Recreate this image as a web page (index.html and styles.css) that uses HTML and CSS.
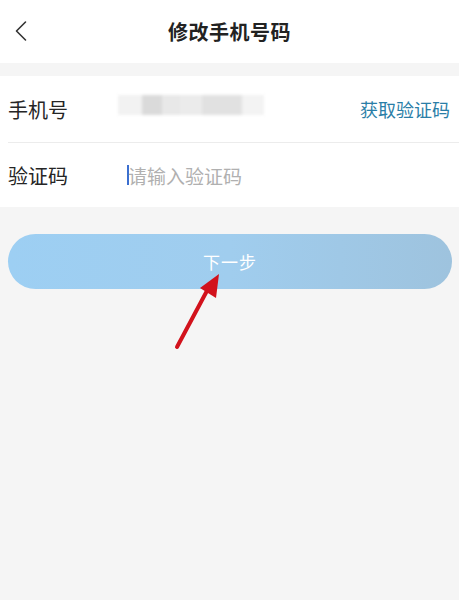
FILE: index.html
```html
<!DOCTYPE html>
<html lang="zh">
<head>
<meta charset="utf-8">
<link rel="stylesheet" href="styles.css">
</head>
<body>
<div class="page">
  <header class="topbar">
    <svg class="back" width="14" height="22" viewBox="0 0 14 22"><path d="M11.5 2 L2.5 11 L11.5 20" fill="none" stroke="#333" stroke-width="1.6" stroke-linecap="round" stroke-linejoin="round"/></svg>
    <h1 class="title">修改手机号码</h1>
  </header>
  <section class="form">
    <div class="row">
      <span class="label">手机号</span>
      <div class="masked">
        <span class="m m1"></span><span class="m m2"></span><span class="m m3"></span><span class="m m4"></span><span class="m m5"></span><span class="m m6"></span>
      </div>
      <span class="getcode">获取验证码</span>
    </div>
    <div class="divider"></div>
    <div class="row row2">
      <span class="label">验证码</span>
      <div class="input"><span class="caret"></span><span class="placeholder">请输入验证码</span></div>
    </div>
  </section>
  <div class="btnwrap">
    <div class="btn">下一步</div>
  </div>
  <svg class="arrow" width="459" height="600" viewBox="0 0 459 600">
    <line x1="177" y1="347" x2="209" y2="287" stroke="#d2121c" stroke-width="4" stroke-linecap="round"/>
    <polygon points="219,274 200,288 216,298" fill="#d2121c"/>
  </svg>
</div>
</body>
</html>
```
FILE: styles.css
```css
* { box-sizing: border-box; }
html, body { margin: 0; padding: 0; }
body {
  background: #f5f5f5;
  font-family: "Noto Sans CJK SC", "Noto Sans", sans-serif;
  width: 459px;
  height: 600px;
  overflow: hidden;
}
.page { position: relative; width: 459px; height: 600px; }
.topbar {
  height: 63px;
  background: #fff;
  display: flex;
  align-items: center;
  justify-content: center;
  position: relative;
}
.back { position: absolute; left: 14px; top: 20px; }
.title {
  margin: 0;
  font-size: 20px;
  font-weight: 700;
  color: #222;
  letter-spacing: 0.5px;
}
.form {
  margin-top: 13px;
  background: #fff;
  height: 131px;
  display: flex;
  flex-direction: column;
}
.row {
  height: 66px;
  display: flex;
  align-items: center;
  padding: 0 9px 0 8px;
}
.row2 { height: 64px; }
.label {
  width: 110px;
  font-size: 20px;
  color: #252525;
  flex: none;
}
.divider { height: 1px; background: #ececec; margin-left: 8px; }
.masked {
  display: flex;
  height: 20px;
  margin-top: -8px;
  flex: 1;
  filter: blur(1.5px);
}
.m { display: block; height: 20px; }
.m1 { width: 24px; background: #f2f2f2; }
.m2 { width: 20px; background: #dadada; }
.m3 { width: 18px; background: #e8e8e8; }
.m4 { width: 22px; background: #ebebeb; }
.m5 { width: 40px; background: #e1e1e1; }
.m6 { width: 22px; background: #f3f3f3; }
.getcode {
  font-size: 18px;
  color: #2a7ea7;
  flex: none;
}
.input { display: flex; align-items: center; margin-left: 9px; }
.caret { width: 2px; height: 20px; background: #3b6fd0; margin-right: -1px; }
.placeholder { font-size: 19px; color: #b0b0b0; }
.btnwrap { padding: 27px 7px 0 8px; }
.btn {
  height: 55px;
  border-radius: 28px;
  background: linear-gradient(90deg, #9dcff3 0%, #a0cdee 50%, #9ec3de 100%);
  color: #fff;
  font-size: 17px;
  display: flex;
  align-items: center;
  justify-content: center;
  letter-spacing: 1px;
}
.arrow { position: absolute; left: 0; top: 0; pointer-events: none; }
```
